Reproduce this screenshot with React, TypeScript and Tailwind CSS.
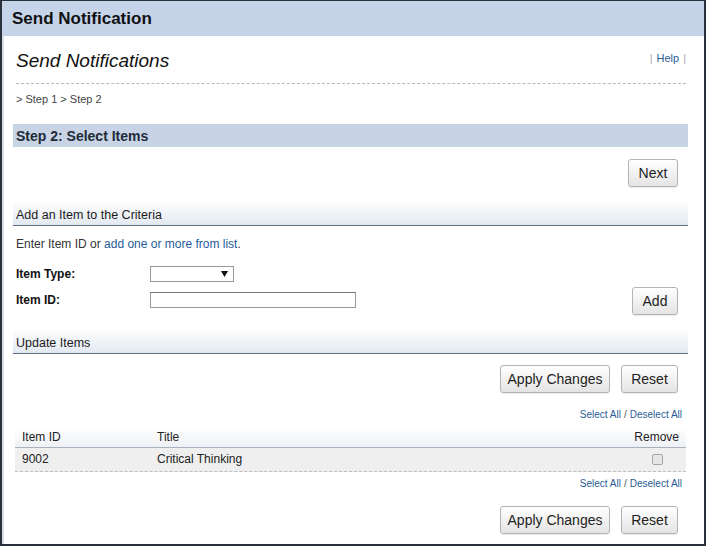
const font = "font-['Liberation_Sans',Arial,sans-serif]";

const btnCls =
  "h-[28px] rounded-[3px] border border-[#b4b4b4] bg-gradient-to-b from-white to-[#e4e4e4] text-[14px] leading-none text-[#222] shadow-[0_1px_1px_rgba(0,0,0,0.08)]";

function SectionHeader({ title }: { title: string }) {
  return (
    <div className="h-[26px] border-b border-[#5c6f82] bg-gradient-to-b from-white to-[#e3e9f1] pl-[3px] pt-[8px] text-[12.5px] leading-[15px] text-[#1b1b1b]">
      {title}
    </div>
  );
}

function SelectLinks() {
  return (
    <div className="flex justify-end pr-[6px] text-[10px] leading-[12px] text-[#2a5d97]">
      <span>Select All</span>
      <span className="px-[3px] text-[#555]">/</span>
      <span>Deselect All</span>
    </div>
  );
}

function ActionButtons() {
  return (
    <div className="flex justify-end gap-[11px] pr-[10px]">
      <button className={`${btnCls} w-[110px]`}>Apply Changes</button>
      <button className={`${btnCls} w-[57px]`}>Reset</button>
    </div>
  );
}

export default function App() {
  return (
    <div
      className={`${font} flex h-[546px] w-[706px] flex-col border-x-2 border-t border-b-2 border-[#28313c] bg-white text-[#222]`}
    >
      <div className="h-[35px] shrink-0 bg-[#c6d4ea] pl-[10px] pt-[8px] text-[17px] font-bold leading-[20px] text-[#111]">
        Send Notification
      </div>

      <div className="flex flex-1 flex-col border-l-2 border-[#dbe0e7]">
        <div className="ml-[9px] w-[675px]">
          {/* page title */}
          <div className="mt-[14px] flex items-start justify-between pl-[3px] pr-[2px]">
            <h1 className="text-[19px] italic leading-[22px] text-[#111]">
              Send Notifications
            </h1>
            <div className="mt-[2px] text-[11px] leading-[13px]">
              <span className="text-[#aaa]">|</span>
              <span className="px-[4px] text-[#2a5d97]">Help</span>
              <span className="text-[#aaa]">|</span>
            </div>
          </div>
          <div className="ml-[3px] mr-[2px] mt-[11px] border-t border-dashed border-[#b8b8b8]" />
          <div className="mt-[9px] pl-[3px] text-[11px] leading-[13px] text-[#444]">
            &gt; Step 1 &gt; Step 2
          </div>

          {/* step bar */}
          <div className="mt-[18px] h-[23px] bg-[#c8d4e6] pl-[3px] pt-px text-[14px] font-bold leading-[22px] text-[#1f2a37]">
            Step 2: Select Items
          </div>

          <div className="mt-[12px] flex justify-end pr-[10px]">
            <button className={`${btnCls} w-[50px]`}>Next</button>
          </div>

          <div className="mt-[13px]">
            <SectionHeader title="Add an Item to the Criteria" />
          </div>

          <p className="mt-[11px] pl-[3px] text-[12px] leading-[14px] text-[#333]">
            Enter Item ID or{" "}
            <span className="text-[#1f5b98]">add one or more from list</span>.
          </p>

          <div className="flex items-start justify-between pl-[3px] pr-[10px]">
            <div className="mt-[15px] flex flex-col gap-[10px]">
              <div className="flex h-[16px] items-center">
                <span className="w-[134px] text-[12px] font-bold leading-[16px] text-[#111]">
                  Item Type:
                </span>
                <div className="flex h-[16px] w-[84px] items-center justify-end border border-[#9a9a9a] bg-white pr-[5px]">
                  <svg width="7" height="6" viewBox="0 0 7 6">
                    <path d="M0 0h7L3.5 6z" fill="#111" />
                  </svg>
                </div>
              </div>
              <div className="flex h-[16px] items-center">
                <span className="w-[134px] text-[12px] font-bold leading-[16px] text-[#111]">
                  Item ID:
                </span>
                <div className="h-[16px] w-[206px] border border-[#9a9a9a] border-t-[#777] bg-white" />
              </div>
            </div>
            <button className={`${btnCls} mt-[36px] h-[27px] w-[46px]`}>Add</button>
          </div>

          <div className="mt-[13px]">
            <SectionHeader title="Update Items" />
          </div>

          <div className="mt-[11px]">
            <ActionButtons />
          </div>

          <div className="mt-[16px]">
            <SelectLinks />
          </div>

          {/* items table */}
          <div className="mx-[2px] mt-[7px] text-[12px] text-[#222]">
            <div className="flex h-[20px] items-center border-b border-[#a9b1ba] bg-gradient-to-b from-white to-[#eef1f5] px-[7px] leading-[19px]">
              <span className="w-[135px]">Item ID</span>
              <span className="flex-1">Title</span>
              <span>Remove</span>
            </div>
            <div className="flex h-[24px] items-center border-b border-dashed border-[#bdbdbd] bg-[#efefef] px-[7px] leading-[23px]">
              <span className="w-[135px]">9002</span>
              <span className="flex-1">Critical Thinking</span>
              <span className="mr-[16px] block h-[11px] w-[11px] rounded-[2px] border border-[#a6a6a6] bg-[#e6e6e6]" />
            </div>
          </div>

          <div className="mt-[6px]">
            <SelectLinks />
          </div>

          <div className="mt-[16px]">
            <ActionButtons />
          </div>
        </div>
      </div>
    </div>
  );
}
